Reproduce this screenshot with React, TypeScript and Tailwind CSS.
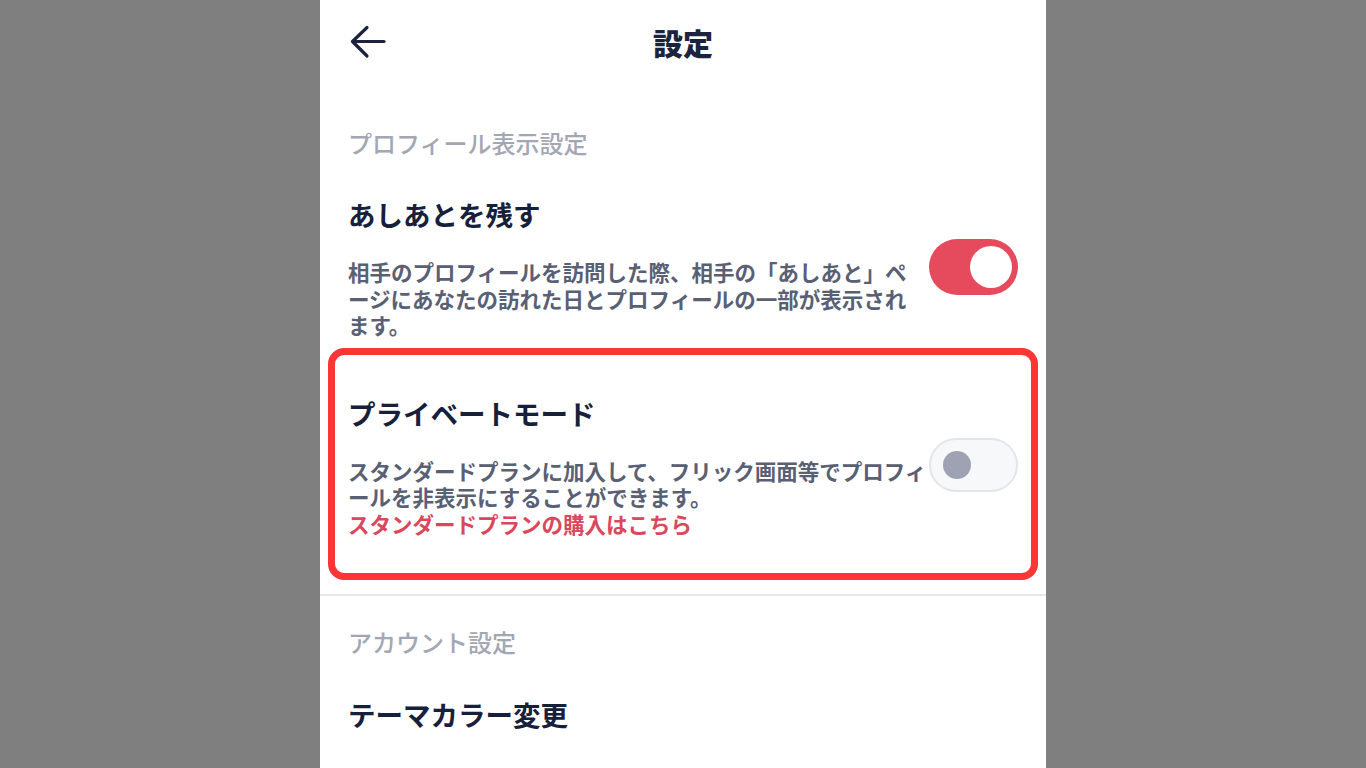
import type { ReactNode } from 'react'

const font = { fontFamily: '"Noto Sans CJK JP", "Noto Sans", sans-serif' }

function BackArrow() {
  return (
    <svg width="36" height="34" viewBox="0 0 36 34" fill="none" className="text-[#1b233d]">
      <path d="M34 16.5H3" stroke="currentColor" strokeWidth="3.2" strokeLinecap="round" />
      <path d="M17 2.5L2.5 16.5L17 31" stroke="currentColor" strokeWidth="3.2" strokeLinecap="round" strokeLinejoin="round" />
    </svg>
  )
}

function Toggle({ on }: { on: boolean }) {
  if (on) {
    return (
      <div className="flex h-[56px] w-[89px] shrink-0 items-center justify-end rounded-full bg-[#e64b5d] pr-[6px]">
        <div className="h-[42px] w-[42px] rounded-full bg-white" />
      </div>
    )
  }
  return (
    <div className="flex h-[54px] w-[89px] shrink-0 items-center rounded-full border-2 border-[#e4e5ea] bg-[#f7f8fa] pl-[12px]">
      <div className="h-[28px] w-[28px] rounded-full bg-[#9ea2b2]" />
    </div>
  )
}

function SectionLabel({ children }: { children: ReactNode }) {
  return (
    <div className="px-7 text-[24px] leading-[34px] font-medium text-[#a3a7b3]">{children}</div>
  )
}

function SettingRow({
  title,
  on,
  children,
}: {
  title: string
  on: boolean
  children: ReactNode
}) {
  return (
    <div className="flex items-center justify-between">
      <div className="flex flex-col">
        <div className="text-[27.5px] leading-[38px] font-bold text-[#17203a]">{title}</div>
        <div className="mt-[26px] whitespace-nowrap text-[21.5px] leading-[26.5px] font-semibold text-[#596074]">
          {children}
        </div>
      </div>
      <Toggle on={on} />
    </div>
  )
}

export default function App() {
  return (
    <div className="h-screen overflow-hidden bg-[#7f7f7f]" style={font}>
      <div className="mx-auto flex h-full w-[726px] flex-col bg-white">
        <header className="relative flex h-[84px] shrink-0 items-center justify-center">
          <button aria-label="戻る" className="absolute left-[30px] top-[25px] p-0">
            <BackArrow />
          </button>
          <h1 className="text-[30px] font-extrabold text-[#1b233d]">設定</h1>
        </header>

        <div className="mt-[42px]">
          <SectionLabel>プロフィール表示設定</SectionLabel>
        </div>

        <div className="mt-[35px] px-7">
          <SettingRow title="あしあとを残す" on={true}>
            相手のプロフィールを訪問した際、相手の「あしあと」ペ
            <br />
            ージにあなたの訪れた日とプロフィールの一部が表示され
            <br />
            ます。
          </SettingRow>
        </div>

        <div className="mx-2 mt-[9px] rounded-[16px] border-[7px] border-[#fc3535] pt-[39px] pb-[36px] pl-[13px] pr-[13px]">
          <SettingRow title="プライベートモード" on={false}>
            スタンダードプランに加入して、フリック画面等でプロフィ
            <br />
            ールを非表示にすることができます。
            <br />
            <a href="#" className="font-bold text-[#d9485c]">スタンダードプランの購入はこちら</a>
          </SettingRow>
        </div>

        <div className="mt-[14px] h-[2px] shrink-0 bg-[#e8e8eb]" />

        <div className="mt-[29px]">
          <SectionLabel>アカウント設定</SectionLabel>
        </div>

        <div className="mt-[36px] px-7 text-[27.5px] leading-[38px] font-bold text-[#17203a]">
          テーマカラー変更
        </div>
      </div>
    </div>
  )
}
